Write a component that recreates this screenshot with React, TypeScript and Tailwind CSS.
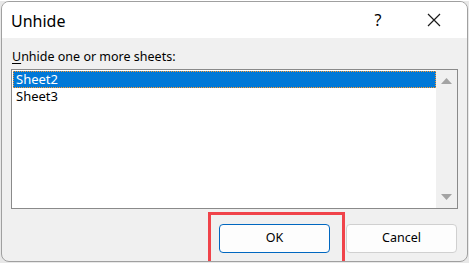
export default function App() {
  const sheets = ["Sheet2", "Sheet3"];

  return (
    <div className="w-[469px] h-[263px] bg-[#e8e8e8] font-['Noto_Sans',sans-serif] text-black">
      <div className="relative w-[467px] h-[261px] ml-px mt-px flex flex-col rounded-lg border border-[#a0a0a0] bg-[#f0f0f0] overflow-hidden">
        {/* title bar */}
        <div className="h-[36px] shrink-0 flex items-center bg-white pl-[9px]">
          <span className="text-[16px] leading-none mt-px">Unhide</span>
          <div className="ml-auto flex items-center">
            <span className="w-[46px] text-center text-[16px] leading-none">?</span>
            <span className="w-[66px] flex justify-center">
              <svg width="14" height="14" viewBox="0 0 14 14" fill="none" stroke="#1a1a1a" strokeWidth="1.2">
                <path d="M1 1 L13 13 M13 1 L1 13" />
              </svg>
            </span>
          </div>
        </div>

        {/* body */}
        <div className="flex-1 flex flex-col px-[9px] pt-[11px]">
          <div className="text-[12.5px] leading-[16px] ml-px">
            <span className="underline underline-offset-2">U</span>nhide one or more sheets:
          </div>
          <div className="mt-[4px] h-[140px] flex border border-[#8a8a8a] bg-white">
            <div className="flex-1 flex flex-col pt-px pl-px">
              {sheets.map((s, i) => (
                <div
                  key={s}
                  className={
                    i === 0
                      ? "h-[17px] flex items-center pl-[3px] text-[13px] text-white bg-[#0078d7] outline outline-1 outline-dotted outline-[#ff9a2e] -outline-offset-1"
                      : "h-[17px] flex items-center pl-[3px] text-[13px]"
                  }
                >
                  {s}
                </div>
              ))}
            </div>
            <div className="w-[21px] bg-[#f0f0f0] flex flex-col items-center justify-between py-[8px]">
              <svg width="11" height="6" viewBox="0 0 11 6">
                <path d="M0 6 L5.5 0 L11 6 Z" fill="#a3a3a3" />
              </svg>
              <svg width="11" height="6" viewBox="0 0 11 6">
                <path d="M0 0 L11 0 L5.5 6 Z" fill="#a3a3a3" />
              </svg>
            </div>
          </div>

          <div className="mt-[15px] flex justify-end gap-[16px] pr-px">
            <button className="w-[111px] h-[29px] rounded-[4px] border border-[#0067c0] bg-[#fdfdfd] text-[12.5px]">
              OK
            </button>
            <button className="w-[111px] h-[29px] rounded-[4px] border border-[#d0d0d0] bg-[#fdfdfd] text-[12.5px]">
              Cancel
            </button>
          </div>
        </div>

        {/* highlight annotation */}
        <div className="absolute left-[206px] top-[210px] w-[137px] h-[53px] border-[3px] border-[#f0434a]" />
      </div>
    </div>
  );
}
